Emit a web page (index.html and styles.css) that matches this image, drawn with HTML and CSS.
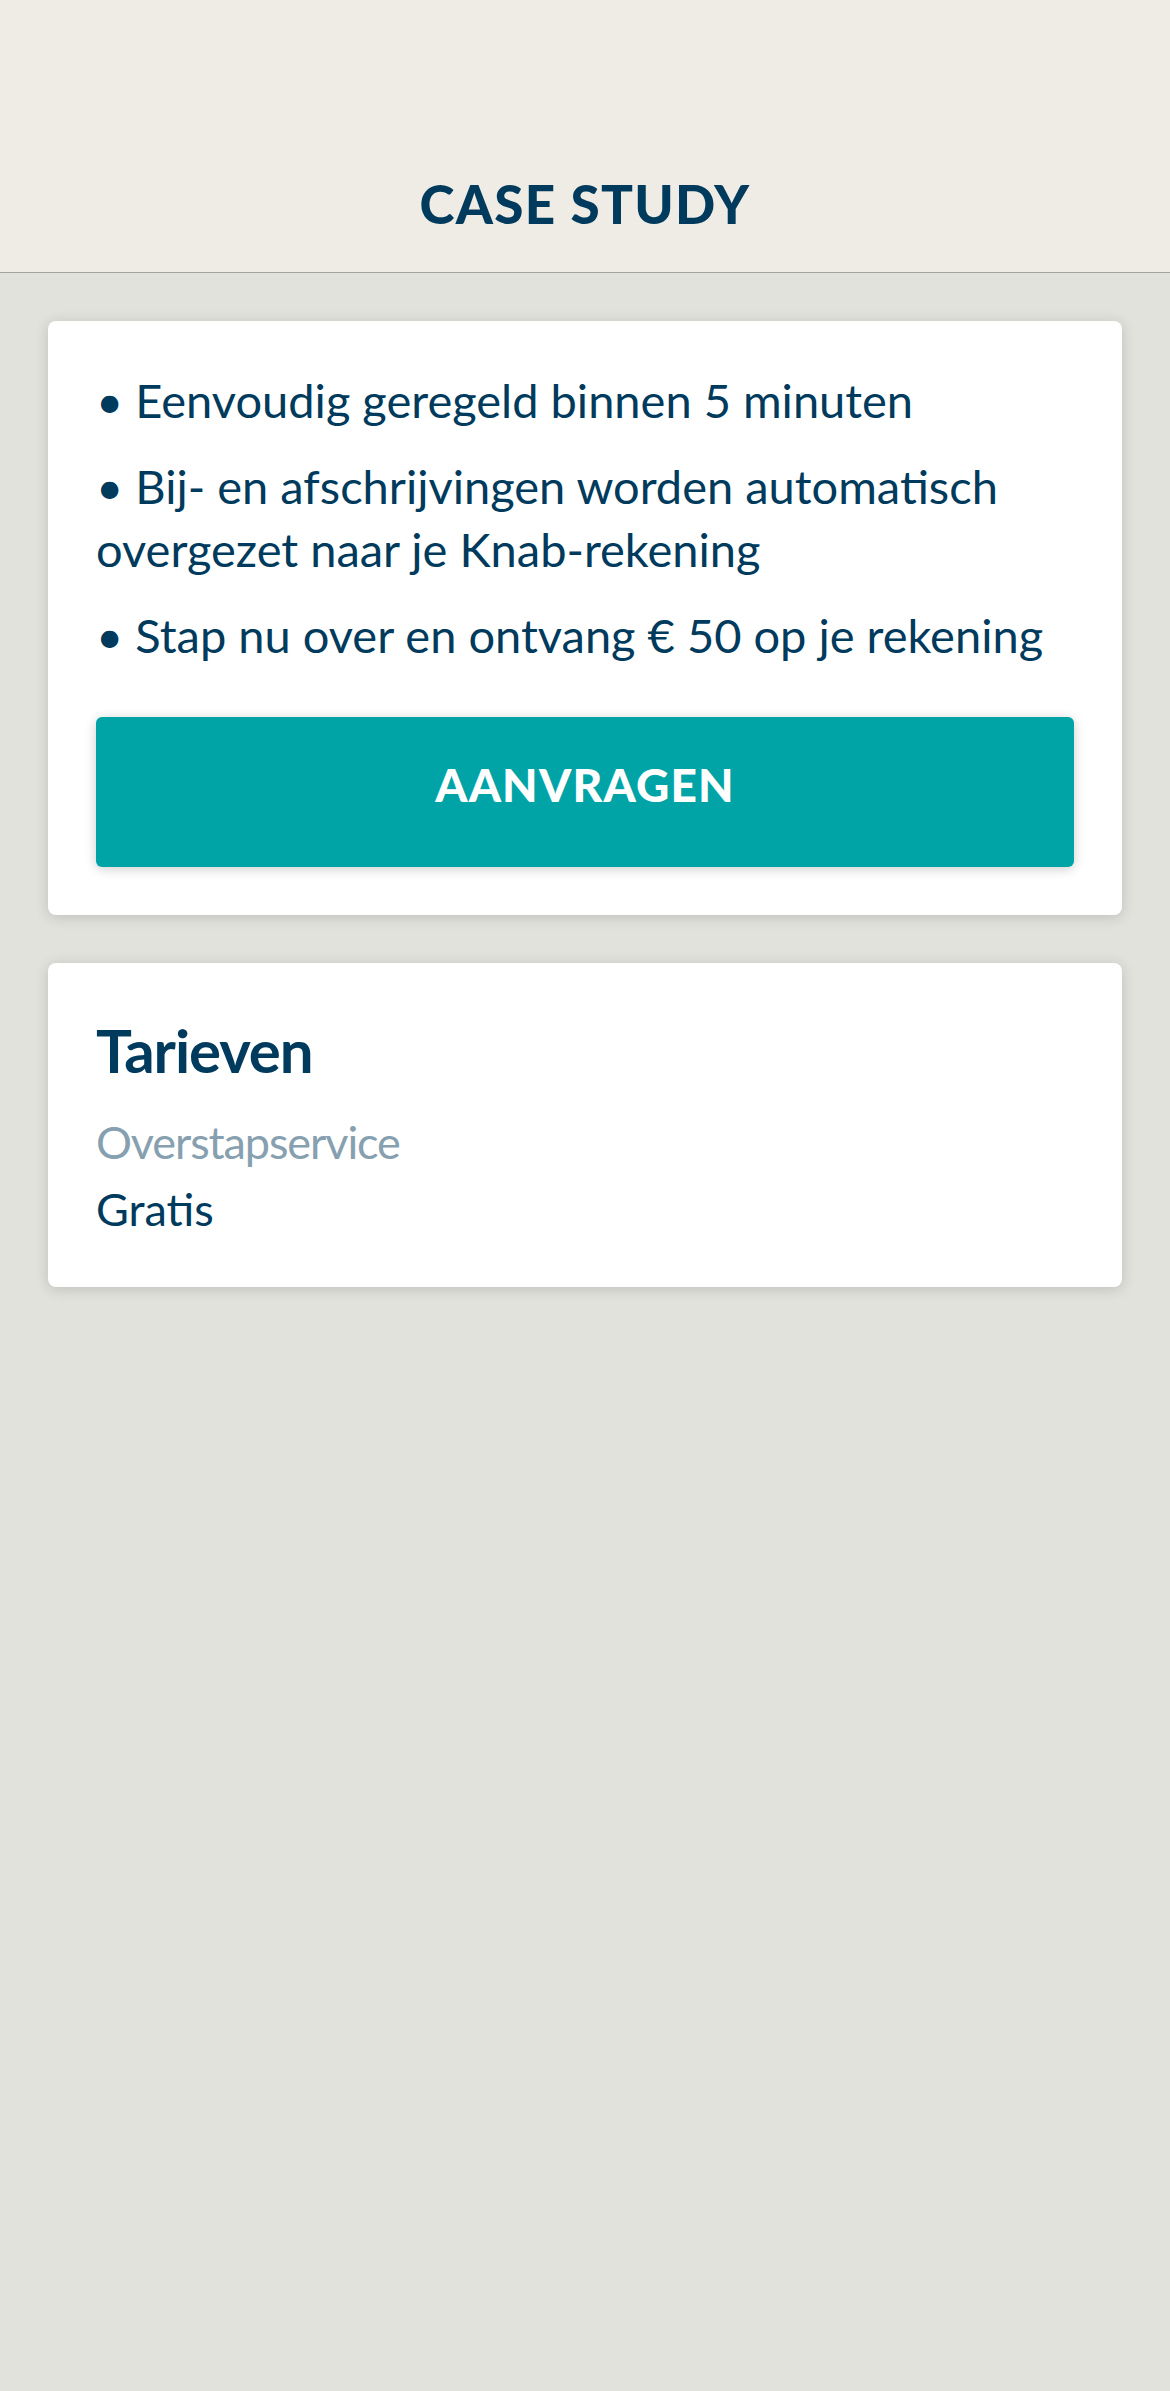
FILE: index.html
```html
<!DOCTYPE html>
<html lang="nl">
<head>
<meta charset="utf-8">
<title>Case study</title>
<link rel="stylesheet" href="styles.css">
</head>
<body>
<header class="topbar">
  <h1 class="topbar-title">CASE STUDY</h1>
</header>
<main class="content">
  <section class="card">
    <p class="bullet">• Eenvoudig geregeld binnen 5 minuten</p>
    <p class="bullet">• Bij- en afschrijvingen worden automatisch overgezet naar je Knab-rekening</p>
    <p class="bullet">• Stap nu over en ontvang € 50 op je rekening</p>
    <button class="cta" type="button">AANVRAGEN</button>
  </section>
  <section class="card">
    <h2 class="card-title">Tarieven</h2>
    <p class="label">Overstapservice</p>
    <p class="value">Gratis</p>
  </section>
</main>
</body>
</html>
```
FILE: styles.css
```css
html, body {
  margin: 0;
  padding: 0;
}
body {
  background: #e2e2dd;
  min-height: 2391px;
  font-family: "Lato", "Noto Sans", sans-serif;
  color: #003a5c;
}
.topbar {
  box-sizing: border-box;
  height: 273px;
  background: #efece5;
  border-bottom: 1px solid #a3a39c;
  display: flex;
  align-items: flex-end;
  justify-content: center;
  padding-bottom: 36px;
}
.topbar-title {
  margin: 0;
  font-family: "Lato", sans-serif;
  font-weight: 900;
  font-size: 53px;
  line-height: 64px;
  letter-spacing: 1.3px;
  color: #003a5c;
}
.content {
  padding: 48px;
  display: flex;
  flex-direction: column;
  gap: 48px;
}
.card {
  background: #fff;
  border-radius: 8px;
  box-shadow: 0 2px 14px rgba(0, 0, 0, 0.16);
  padding: 48px;
  display: flex;
  flex-direction: column;
}
.bullet {
  margin: 0 0 23px;
  font-size: 47px;
  line-height: 63px;
  letter-spacing: 0px;
}
.bullet:last-of-type {
  margin-bottom: 0;
}
.cta {
  margin-top: 50px;
  height: 150px;
  border: 0;
  border-radius: 6px;
  background: #00a4a7;
  color: #fff;
  font-family: "Lato", sans-serif;
  font-weight: 900;
  font-size: 46px;
  line-height: 136px;
  letter-spacing: 1.2px;
  padding: 0 0 14px;
  box-shadow: 0 2px 12px rgba(0, 0, 0, 0.2);
}
.card-title {
  margin: 0;
  font-weight: 700;
  font-size: 60px;
  line-height: 78px;
  letter-spacing: -1.1px;
}
.label {
  margin: 23px 0 0;
  font-size: 45px;
  line-height: 60px;
  letter-spacing: -1.1px;
  color: #86a0b0;
}
.value {
  margin: 7px 0 0;
  font-size: 45px;
  line-height: 60px;
}
```
